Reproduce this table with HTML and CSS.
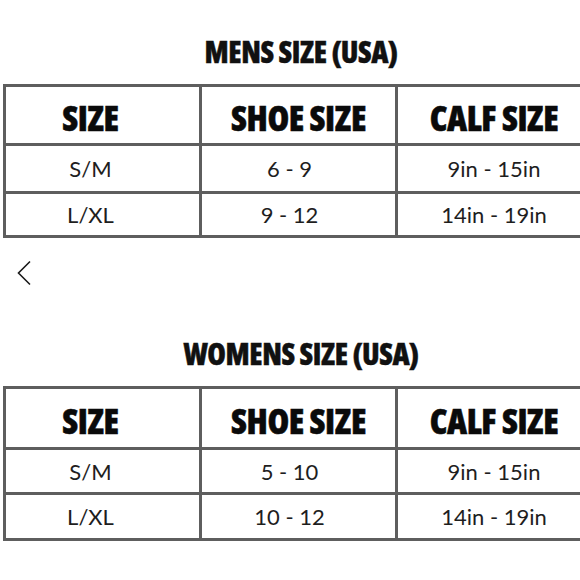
FILE: index.html
```html
<!DOCTYPE html>
<html>
<head>
<meta charset="utf-8">
<link rel="stylesheet" href="styles.css">
</head>
<body>
<main class="page">
  <section class="chart chart-men">
    <h2 class="chart-title">MENS SIZE (USA)</h2>
    <table class="size-table">
      <thead>
        <tr><th class="c1">SIZE</th><th class="c2">SHOE SIZE</th><th class="c3">CALF SIZE</th></tr>
      </thead>
      <tbody>
        <tr class="r1"><td class="c1">S/M</td><td class="c2">6 - 9</td><td class="c3">9in - 15in</td></tr>
        <tr class="r2"><td class="c1">L/XL</td><td class="c2">9 - 12</td><td class="c3">14in - 19in</td></tr>
      </tbody>
    </table>
  </section>

  <div class="nav-row">
    <button class="back" aria-label="Back">
      <svg width="16" height="26" viewBox="0 0 16 26"><path d="M14 1.5 L2.5 13 L14 24.5" fill="none" stroke="#1a1a1a" stroke-width="1.6"/></svg>
    </button>
  </div>

  <section class="chart chart-women">
    <h2 class="chart-title">WOMENS SIZE (USA)</h2>
    <table class="size-table">
      <thead>
        <tr><th class="c1">SIZE</th><th class="c2">SHOE SIZE</th><th class="c3">CALF SIZE</th></tr>
      </thead>
      <tbody>
        <tr class="r1"><td class="c1">S/M</td><td class="c2">5 - 10</td><td class="c3">9in - 15in</td></tr>
        <tr class="r2"><td class="c1">L/XL</td><td class="c2">10 - 12</td><td class="c3">14in - 19in</td></tr>
      </tbody>
    </table>
  </section>
</main>
</body>
</html>
```
FILE: styles.css
```css
html, body {
  margin: 0;
  padding: 0;
  background: #fff;
  overflow: hidden;
}
.page {
  width: 596px;
  padding-left: 3px;
}
.chart-title {
  margin: 0;
  text-align: center;
  font-family: "Open Sans", sans-serif;
  font-stretch: 75%;
  font-weight: 800;
  font-size: 30px;
  line-height: 34px;
  color: #111;
  letter-spacing: -0.4px;
  -webkit-text-stroke: 0.4px #111;
}
.chart-men { padding-top: 35px; }
.chart-men .chart-title { margin-bottom: 15px; }
.chart-women .chart-title { margin-bottom: 15px; }

.size-table {
  width: 590px;
  border-collapse: collapse;
  table-layout: fixed;
}
.size-table th, .size-table td {
  border: 3px solid #5e5e5e;
  text-align: center;
  padding: 0;
}
.size-table th {
  height: 50px;
  padding-top: 6px;
  font-family: "Open Sans", sans-serif;
  font-stretch: 75%;
  font-weight: 800;
  font-size: 35px;
  line-height: 40px;
  color: #0a0a0a;
  letter-spacing: -0.4px;
  -webkit-text-stroke: 0.5px #0a0a0a;
}
.chart-women th { height: 52px; }
.size-table td {
  height: 43px;
  font-family: Lato, sans-serif;
  font-weight: 400;
  font-size: 22px;
  color: #1e1e1e;
}
.chart-men .r1 td { height: 45px; }
.chart-men .r2 td { height: 41px; }
.chart-women .r1 td { height: 42px; }
.chart-women .r2 td { height: 43px; }

.size-table th.c1 { width: 169px; padding-right: 24px; }
.size-table td.c1 { padding-right: 24px; }
.size-table th.c2 { width: 193px; }
.size-table td.c2 { padding-right: 18px; }

.nav-row {
  height: 99px;
  display: flex;
  align-items: flex-start;
}
.back {
  margin: 22px 0 0 13px;
  padding: 0;
  border: 0;
  background: none;
  display: flex;
}
```
